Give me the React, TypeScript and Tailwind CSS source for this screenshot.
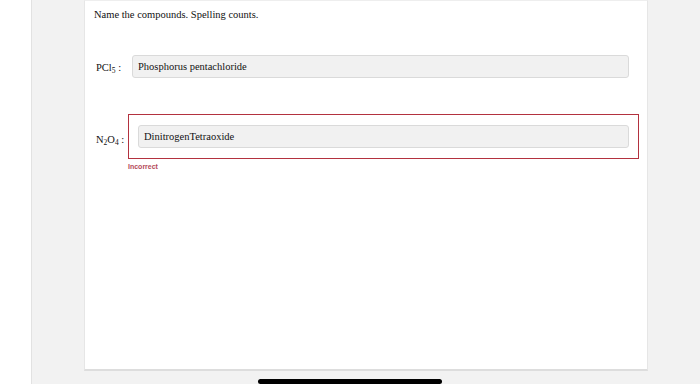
export default function App() {
  const serif = { fontFamily: '"Liberation Serif", "Times New Roman", serif' };
  return (
    <div className="relative flex w-[700px] h-[384px] overflow-hidden bg-[#f2f2f2]" style={serif}>
      <div className="w-[32px] h-full bg-white border-r border-[#e2e2e2]" />
      <div className="flex-1 pl-[52px]">
        <div className="w-[564px] h-[371px] bg-white border border-t-[#eeeeee] border-x-[#e6e6e6] border-b-[#dddddd] border-b-2 pl-[11px] pr-[8px] pt-[7px] text-[#111]">
          <p className="text-[10.5px] leading-[14px] -ml-[2px]">Name the compounds. Spelling counts.</p>

          <div className="flex items-center mt-[33px]">
            <div className="w-[36px] text-[10.5px] pt-[3px]">
              PCl<sub className="text-[7.5px]">5</sub> :
            </div>
            <div className="flex-1 mr-[10px] h-[23px] flex items-center px-[5px] bg-[#f1f1f1] border border-[#dadada] rounded-[3px] text-[10.5px]">
              Phosphorus pentachloride
            </div>
          </div>

          <div className="flex items-center mt-[36px]">
            <div className="w-[32px] text-[10.5px] pt-[7px]">
              N<sub className="text-[7.5px]">2</sub>O<sub className="text-[7.5px]">4</sub> :
            </div>
            <div className="flex-1 border-[1.5px] border-[#b3323f] px-[9px] py-[10px]">
              <div className="h-[23px] flex items-center px-[5px] bg-[#f1f1f1] border border-[#dadada] rounded-[3px] text-[10.5px]">
                DinitrogenTetraoxide
              </div>
            </div>
          </div>
          <p
            className="ml-[32px] mt-[4px] text-[7px] leading-[8px] font-semibold text-[#b54a5a]"
            style={{ fontFamily: '"Liberation Sans", Arial, sans-serif' }}
          >
            Incorrect
          </p>
        </div>
      </div>
      <div className="absolute left-[258px] bottom-0 w-[184px] h-[5px] rounded-full bg-black" />
    </div>
  );
}
